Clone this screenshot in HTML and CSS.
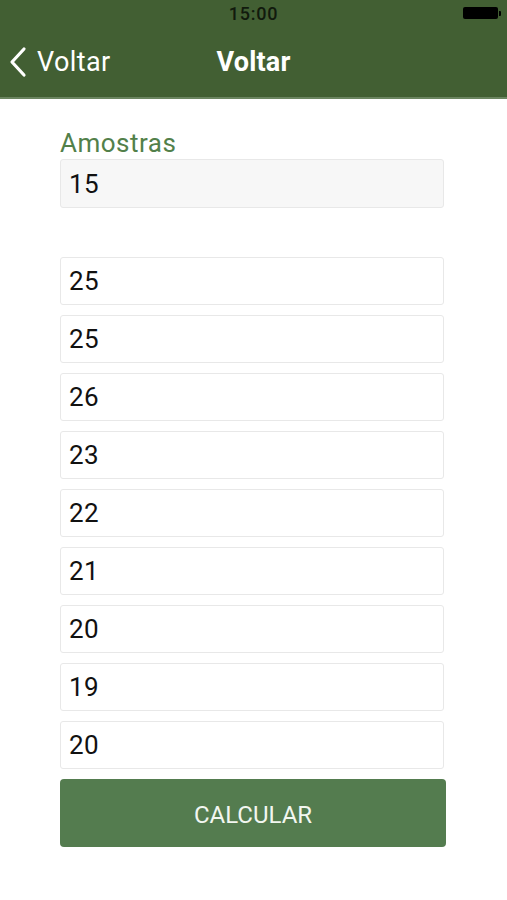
FILE: index.html
```html
<!DOCTYPE html>
<html lang="pt">
<head>
  <meta charset="UTF-8">
  <title>Amostras</title>
  <link rel="stylesheet" href="styles.css">
</head>
<body>

<header class="top-bar">
  <div class="status-bar">
    <span class="clock">15:00</span>
    <span class="battery"></span>
  </div>
  <nav class="nav-bar">
    <a href="#" class="back-link">
      <svg class="chevron" width="20" height="32" viewBox="0 0 20 32">
        <path d="M16 3 L4 16 L16 29" fill="none" stroke="#fff" stroke-width="3.2" stroke-linecap="round" stroke-linejoin="round"/>
      </svg>
      Voltar
    </a>
    <span class="nav-title">Voltar</span>
  </nav>
</header>

<main class="samples">
  <label class="samples-label" for="count">Amostras</label>
  <input class="field field-count" id="count" type="text" value="15">

  <div class="values">
    <input class="field" type="text" value="25">
    <input class="field" type="text" value="25">
    <input class="field" type="text" value="26">
    <input class="field" type="text" value="23">
    <input class="field" type="text" value="22">
    <input class="field" type="text" value="21">
    <input class="field" type="text" value="20">
    <input class="field" type="text" value="19">
    <input class="field" type="text" value="20">
  </div>

  <button class="calc-btn" type="button">CALCULAR</button>
</main>

</body>
</html>
```

FILE: styles.css
```css
body {
  margin: 0;
  font-family: Roboto, "Liberation Sans", sans-serif;
  background: #fff;
  color: #111;
}

.top-bar {
  background: #425f33;
  border-bottom: 2px solid #6b8560;
}

.status-bar {
  height: 26px;
  display: flex;
  align-items: center;
  justify-content: center;
  position: relative;
}

.clock {
  font-size: 18px;
  font-weight: 500;
  letter-spacing: 0.8px;
  color: #111a0d;
}

.battery {
  position: absolute;
  right: 9px;
  top: 7px;
  width: 35px;
  height: 12px;
  background: #000;
  border-radius: 2px;
}

.battery::after {
  content: "";
  position: absolute;
  right: -3px;
  top: 4px;
  width: 2px;
  height: 5px;
  background: #000;
  border-radius: 0 1px 1px 0;
}

.nav-bar {
  height: 71px;
  display: flex;
  align-items: center;
  position: relative;
}

.back-link {
  display: flex;
  align-items: center;
  gap: 9px;
  margin-left: 8px;
  color: #fff;
  text-decoration: none;
  font-size: 27px;
  letter-spacing: 0.4px;
}

.nav-title {
  position: absolute;
  left: 0;
  right: 0;
  text-align: center;
  color: #fff;
  font-size: 27px;
  font-weight: bold;
  letter-spacing: 0.2px;
  pointer-events: none;
}

.samples {
  width: 384px;
  margin: 0 auto 0 60px;
  padding-top: 29px;
}

.samples-label {
  display: block;
  color: #52804a;
  font-size: 26px;
  line-height: 30px;
  letter-spacing: 0.5px;
  margin-bottom: 1px;
}

.field {
  display: block;
  box-sizing: border-box;
  width: 100%;
  height: 48px;
  margin: 0;
  padding: 0 8px;
  border: 1px solid #e8e8e8;
  border-radius: 3px;
  background: #fff;
  font-family: Roboto, "Liberation Sans", sans-serif;
  font-size: 26px;
  letter-spacing: 0.3px;
  color: #111;
  outline: none;
}

.field-count {
  height: 49px;
  background: #f7f7f7;
}

.values {
  display: flex;
  flex-direction: column;
  gap: 10px;
  margin-top: 49px;
}

.calc-btn {
  display: block;
  width: 386px;
  height: 68px;
  margin-top: 10px;
  padding-top: 4px;
  border: none;
  border-radius: 4px;
  background: #547c4f;
  color: #f2f6f0;
  font-family: Roboto, "Liberation Sans", sans-serif;
  font-size: 24px;
  cursor: pointer;
}
```
